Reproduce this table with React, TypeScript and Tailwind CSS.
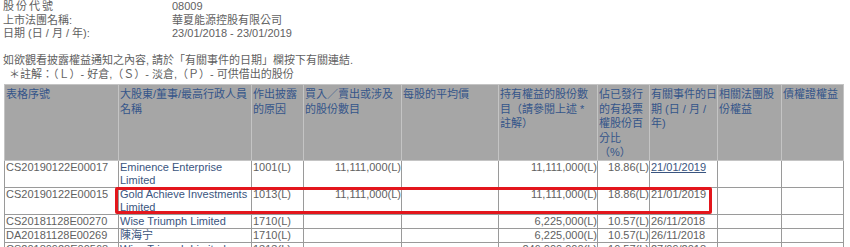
type Row = {
  id: string;
  name: string;
  reason: string;
  bought: string;
  avg: string;
  held: string;
  pct: string;
  date: string;
  dateLink?: boolean;
  lines: 1 | 2;
};

const rows: Row[] = [
  { id: "CS20190122E00017", name: "Eminence Enterprise Limited", reason: "1001(L)", bought: "11,111,000(L)", avg: "", held: "11,111,000(L)", pct: "18.86(L)", date: "21/01/2019", dateLink: true, lines: 2 },
  { id: "CS20190122E00015", name: "Gold Achieve Investments Limited", reason: "1013(L)", bought: "11,111,000(L)", avg: "", held: "11,111,000(L)", pct: "18.86(L)", date: "21/01/2019", lines: 2 },
  { id: "CS20181128E00270", name: "Wise Triumph Limited", reason: "1710(L)", bought: "", avg: "", held: "6,225,000(L)", pct: "10.57(L)", date: "26/11/2018", lines: 1 },
  { id: "DA20181128E00269", name: "陳海宁", reason: "1710(L)", bought: "", avg: "", held: "6,225,000(L)", pct: "10.57(L)", date: "26/11/2018", lines: 1 },
  { id: "CS20180928E00568", name: "Wise Triumph Limited", reason: "1313(L)", bought: "", avg: "", held: "246,000,000(L)", pct: "10.57(L)", date: "27/09/2018", lines: 1 },
];

const th = "border border-[#c4c4c4] align-top text-left font-normal pt-[2px] pl-px text-[#34558a]";
const td = "border border-[#9a9a9a] align-top p-0 pl-px";

export default function App() {
  return (
    <main
      className="relative w-[850px] h-[247px] overflow-hidden bg-white pl-[3px] text-[11px] text-[#616161]"
      style={{ fontFamily: '"Liberation Sans", Arial, "Noto Sans CJK TC", sans-serif' }}
    >
      <section className="leading-[13.5px]">
        <div className="flex">
          <span className="w-[169px] tracking-[2px]">股份代號</span>
          <span>08009</span>
        </div>
        <div className="flex">
          <span className="w-[169px]">上市法團名稱:</span>
          <span>華夏能源控股有限公司</span>
        </div>
        <div className="flex">
          <span className="w-[169px]">日期 (日 / 月 / 年):</span>
          <span>23/01/2018 - 23/01/2019</span>
        </div>
        <div className="h-[13.5px]" />
        <p>如欲觀看披露權益通知之內容, 請於「有關事件的日期」欄按下有關連結.</p>
        <p className="pl-[6px]">＊註解：（Ｌ）- 好倉,（Ｓ）- 淡倉,（Ｐ）- 可供借出的股份</p>
      </section>

      <table className="mt-[3px] ml-px w-[839px] table-fixed border-collapse border border-[#9a9a9a]">
        <colgroup>
          <col className="w-[114px]" />
          <col className="w-[133px]" />
          <col className="w-[52px]" />
          <col className="w-[98px]" />
          <col className="w-[97px]" />
          <col className="w-[99px]" />
          <col className="w-[52px]" />
          <col className="w-[68px]" />
          <col className="w-[64px]" />
          <col className="w-[62px]" />
        </colgroup>
        <thead>
          <tr className="h-[76px] bg-[#a6a6a6] leading-[14.5px]">
            <th className={th}>表格序號</th>
            <th className={th}>
              大股東/董事/最高行政人員
              <br />
              名稱
            </th>
            <th className={th}>
              作出披露
              <br />
              的原因
            </th>
            <th className={th}>
              買入／賣出或涉及
              <br />
              的股份數目
            </th>
            <th className={th}>每股的平均價</th>
            <th className={th}>
              持有權益的股份數
              <br />
              目（請參閱上述 *
              <br />
              註解）
            </th>
            <th className={th}>
              佔已發行
              <br />
              的有投票
              <br />
              權股份百
              <br />
              分比
              <br />
              （%）
            </th>
            <th className={th}>
              有關事件的日
              <br />
              期 (日 / 月 /
              <br />
              年)
            </th>
            <th className={th}>
              相關法團股
              <br />
              份權益
            </th>
            <th className={th}>債權證權益</th>
          </tr>
        </thead>
        <tbody className="leading-[13px]">
          {rows.map((r) => (
            <tr key={r.id + r.date} className={r.lines === 2 ? "h-[27px]" : "h-[14px]"}>
              <td className={td}>{r.id}</td>
              <td className={`${td} text-[#3a5580]`}>{r.name}</td>
              <td className={td}>{r.reason}</td>
              <td className={`${td} text-right`}>{r.bought}</td>
              <td className={td}>{r.avg}</td>
              <td className={`${td} text-right`}>{r.held}</td>
              <td className={`${td} text-right`}>{r.pct}</td>
              <td className={td}>
                {r.dateLink ? <span className="text-[#3a5580] underline">{r.date}</span> : r.date}
              </td>
              <td className={td} />
              <td className={td} />
            </tr>
          ))}
        </tbody>
      </table>

      <div className="absolute left-[115px] top-[187px] h-[27px] w-[597px] rounded-[2px] border-[3px] border-[#e3161c]" />
    </main>
  );
}
